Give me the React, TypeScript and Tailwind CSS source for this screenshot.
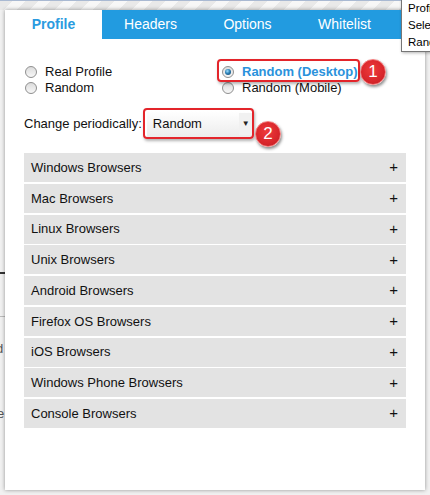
const font = "font-['Liberation_Sans',Arial,sans-serif]";

const tabs = ["Profile", "Headers", "Options", "Whitelist"];

const groups = [
  "Windows Browsers",
  "Mac Browsers",
  "Linux Browsers",
  "Unix Browsers",
  "Android Browsers",
  "Firefox OS Browsers",
  "iOS Browsers",
  "Windows Phone Browsers",
  "Console Browsers",
];

function Radio({ checked }: { checked?: boolean }) {
  return (
    <span className="flex h-[12px] w-[12px] shrink-0 items-center justify-center rounded-full border border-[#8f8f8f] bg-gradient-to-b from-[#dcdcdc] to-[#f7f7f7]">
      {checked && (
        <span className="h-[6px] w-[6px] rounded-full bg-[radial-gradient(circle_at_40%_35%,#9fe0ff_0%,#2b7fb5_45%,#123b5c_100%)]" />
      )}
    </span>
  );
}

function Badge({ n }: { n: number }) {
  return (
    <span className="flex h-[26px] w-[26px] items-center justify-center rounded-full border-[1.5px] border-[#f27c7c] bg-[radial-gradient(circle_at_45%_40%,#ee3b3b_0%,#d8262b_60%,#b81d22_100%)] text-[17px] text-white shadow-[1px_2px_3px_rgba(0,0,0,0.45)]">
      {n}
    </span>
  );
}

export default function App() {
  return (
    <div className={`relative h-[495px] w-[430px] overflow-hidden bg-[#f1f1f1] ${font}`}>
      {/* browser strip behind the popup */}
      <div className="h-[10px] border-t border-[#a9b9d2] bg-[repeating-linear-gradient(135deg,#e9e9e9_0px,#e9e9e9_9px,#f7f7f7_9px,#f7f7f7_18px)]" />

      {/* page fragments peeking out at the left */}
      <div className="absolute left-0 top-[272px] h-[2px] w-[5px] bg-[#333]" />
      <div className="absolute left-0 top-[316px] h-px w-[5px] bg-[#bbb]" />
      <div className="absolute left-[-4px] top-[339px] text-[13px] text-[#555]">d</div>
      <div className="absolute left-[-3px] top-[404px] text-[13px] text-[#555]">e</div>

      {/* popup */}
      <div className="absolute left-[5px] top-[10px] h-[480px] w-[420px] bg-white shadow-[0_0_4px_rgba(0,0,0,0.4)]">
        <div className="flex h-[29px] bg-[#229be0]">
          {tabs.map((t, i) => (
            <div
              key={t}
              className={`flex w-[97px] items-center justify-center text-[14px] ${
                i === 0 ? "bg-white font-bold text-[#2a9be0]" : "text-white"
              }`}
            >
              {t}
            </div>
          ))}
        </div>

        <div className="px-[19px] pt-[25px] text-[13px] text-[#111]">
          <div className="grid grid-cols-[198px_1fr] leading-[16px]">
            <label className="flex items-center gap-[8px] pl-[1px]">
              <Radio />
              Real Profile
            </label>
            <label className="flex items-center gap-[8px] font-bold text-[#2a92dc]">
              <Radio checked />
              Random (Desktop)
            </label>
            <label className="flex items-center gap-[8px] pl-[1px]">
              <Radio />
              Random
            </label>
            <label className="flex items-center gap-[8px]">
              <Radio />
              Random (Mobile)
            </label>
          </div>

          <div className="mt-[14px] flex h-[28px] items-center">
            <span>Change periodically:</span>
            <div className="ml-[5px] flex h-[26px] w-[106px] items-center justify-between bg-gradient-to-b from-white to-[#ececec] pl-[6px]">
              <span>Random</span>
              <span className="flex h-[22px] w-[14px] items-center justify-center bg-[#f1f1f1] text-[8px] text-[#222]">
                ▼
              </span>
            </div>
          </div>

          <div className="mt-[15px] flex w-[382px] flex-col gap-[1.75px]">
            {groups.map((g) => (
              <div
                key={g}
                className="flex h-[29px] items-center justify-between bg-[#e3e3e3] pl-[7px] pr-[8px] text-[#111]"
              >
                <span>{g}</span>
                <span className="text-[15px]">+</span>
              </div>
            ))}
          </div>
        </div>
      </div>

      {/* annotations */}
      <div className="absolute left-[217px] top-[59px] h-[23px] w-[143px] rounded-[4px] border-2 border-[#e3252b] shadow-[1px_2px_3px_rgba(0,0,0,0.3)]" />
      <div className="absolute left-[360px] top-[59px]">
        <Badge n={1} />
      </div>
      <div className="absolute left-[143px] top-[108px] h-[31px] w-[111px] rounded-[4px] border-2 border-[#e3252b] shadow-[1px_2px_3px_rgba(0,0,0,0.3)]" />
      <div className="absolute left-[255px] top-[121px]">
        <Badge n={2} />
      </div>

      {/* tooltip from the browser */}
      <div className="absolute left-[401px] top-[-3px] h-[55px] w-[60px] border border-[#767676] bg-white pl-[6px] pt-[2px] text-[11.5px] leading-[17px] text-black shadow-[1px_1px_3px_rgba(0,0,0,0.3)]">
        <div>Profile</div>
        <div>Select</div>
        <div>Random</div>
      </div>
    </div>
  );
}
